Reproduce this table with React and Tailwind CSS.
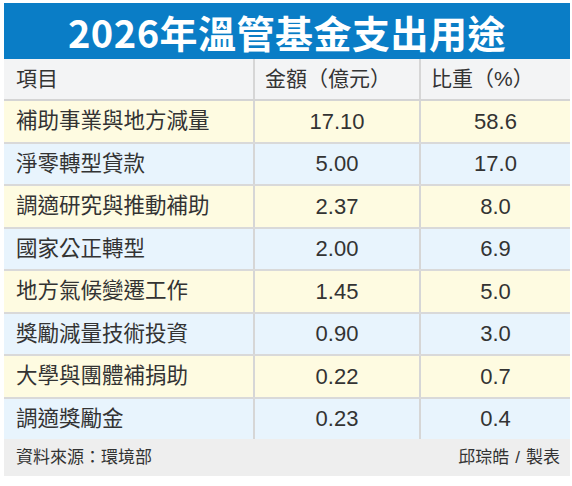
const rows = [
  ["補助事業與地方減量", "17.10", "58.6"],
  ["淨零轉型貸款", "5.00", "17.0"],
  ["調適研究與推動補助", "2.37", "8.0"],
  ["國家公正轉型", "2.00", "6.9"],
  ["地方氣候變遷工作", "1.45", "5.0"],
  ["獎勵減量技術投資", "0.90", "3.0"],
  ["大學與團體補捐助", "0.22", "0.7"],
  ["調適獎勵金", "0.23", "0.4"],
];

export default function App() {
  return (
    <div
      className="w-[572px] h-[486px] bg-white pt-[3px] pl-[4px] text-[#333333]"
      style={{ fontFamily: '"Liberation Sans", "Noto Sans CJK TC", sans-serif' }}
    >
      <div className="w-[566px] flex flex-col">
        <div
          className="h-[56px] bg-[#0a7dc6] flex items-center justify-center text-white font-bold text-[38px] tracking-[0.5px]"
          style={{ fontFamily: '"Noto Sans CJK TC", sans-serif' }}
        >
          2026年溫管基金支出用途
        </div>
        <div className="grid grid-cols-[251px_166px_149px] h-[42px] bg-[#f3f4f5] border-b-2 border-[#d4d4d4] text-[21px]">
          <div className="flex items-center pl-[12px] border-r-2 border-[#d6d6d6]">項目</div>
          <div className="flex items-center pl-[10px] border-r-2 border-[#d6d6d6]">金額（億元）</div>
          <div className="flex items-center pl-[10px]">比重（%）</div>
        </div>
        {rows.map((r, i) => (
          <div
            key={i}
            className={`grid grid-cols-[251px_166px_149px] h-[42.5px] border-b-2 border-[#d9d9d9] ${
              i % 2 === 0 ? "bg-[#fefbe1]" : "bg-[#e8f4fd]"
            }`}
          >
            <div className="flex items-center pl-[12px] border-r-2 border-[#d6d6d6] text-[21.5px]">{r[0]}</div>
            <div className="flex items-center justify-center border-r-2 border-[#d6d6d6] text-[22px]">{r[1]}</div>
            <div className="flex items-center justify-center text-[22px]">{r[2]}</div>
          </div>
        ))}
        <div className="h-[37px] bg-[#eeeeee] flex items-center justify-between pl-[12px] pr-[10px] text-[17px] -mt-[2px]">
          <span>資料來源：環境部</span>
          <span className="flex items-center gap-[6px]">
            <span>邱琮皓</span>
            <span>/</span>
            <span>製表</span>
          </span>
        </div>
      </div>
    </div>
  );
}
